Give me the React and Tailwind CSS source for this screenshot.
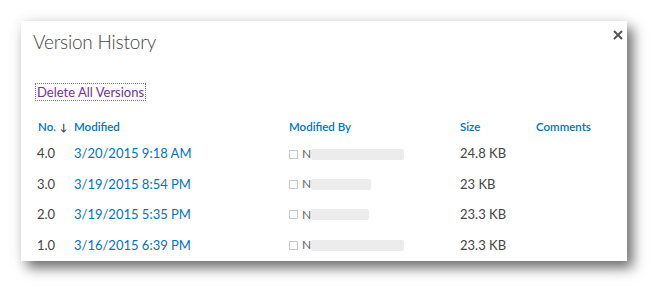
import React from 'react';

const rows = [
  { no: '4.0', date: '3/20/2015 9:18 AM', nameW: 'w-[93px]', size: '24.8 KB' },
  { no: '3.0', date: '3/19/2015 8:54 PM', nameW: 'w-[60px]', size: '23 KB' },
  { no: '2.0', date: '3/19/2015 5:35 PM', nameW: 'w-[58px]', size: '23.3 KB' },
  { no: '1.0', date: '3/16/2015 6:39 PM', nameW: 'w-[93px]', size: '23.3 KB' },
];

function ModifiedBy({ nameW }) {
  return (
    <div className="flex items-center">
      <span className="w-[9px] h-[9px] border border-[#c8c8c8] bg-white" />
      <span className="ml-[4px] text-[#666] text-[12px] leading-none">N</span>
      <span className={`h-[11px] bg-[#ececec] rounded-[2px] ${nameW}`} />
    </div>
  );
}

export default function App() {
  return (
    <div
      className="w-[669px] h-[303px] bg-white pt-[21px] pl-[21px]"
      style={{ fontFamily: 'Lato, "Open Sans", sans-serif' }}
    >
      <div className="relative w-[606px] h-[240px] bg-white shadow-[0_0_14px_rgba(0,0,0,0.07),6px_7px_12px_rgba(0,0,0,0.55)]">
        <button className="absolute right-[4px] top-[9px] text-[#555]">
          <svg width="10" height="10" viewBox="0 0 10 10">
            <path d="M1 1L9 9M9 1L1 9" stroke="currentColor" strokeWidth="2" />
          </svg>
        </button>

        <div className="pl-[12px] pt-[7px]">
          <h1 className="text-[19px] leading-[28px] font-light text-[#444] tracking-[-0.2px]">
            Version History
          </h1>

          <div className="mt-[23px] ml-[2px]">
            <span className="inline-block border border-dotted border-[#777] px-[1px] text-[13px] leading-[16px] text-[#7030a0]">
              Delete All Versions
            </span>
          </div>

          <div className="mt-[12px] text-[13px]">
            <div className="flex items-center h-[24px] text-[#0072c6] text-[11.5px] font-semibold">
              <div className="w-[41px] pl-[5px] flex items-center">
                No.<span className="ml-[4px] text-[#444] text-[10px] font-bold">↓</span>
              </div>
              <div className="w-[215px]">Modified</div>
              <div className="w-[171px]">Modified By</div>
              <div className="w-[76px]">Size</div>
              <div>Comments</div>
            </div>
            {rows.map((r, i) => (
              <div key={r.no} className={`flex items-center text-[#444] ${i === 0 ? 'h-[30px]' : 'h-[30.5px]'}`}>
                <div className="w-[41px] pl-[4px]">{r.no}</div>
                <div className="w-[215px] text-[#0072c6]">{r.date}</div>
                <div className="w-[171px]">
                  <ModifiedBy nameW={r.nameW} />
                </div>
                <div className="w-[76px]">{r.size}</div>
                <div />
              </div>
            ))}
          </div>
        </div>
      </div>
    </div>
  );
}
